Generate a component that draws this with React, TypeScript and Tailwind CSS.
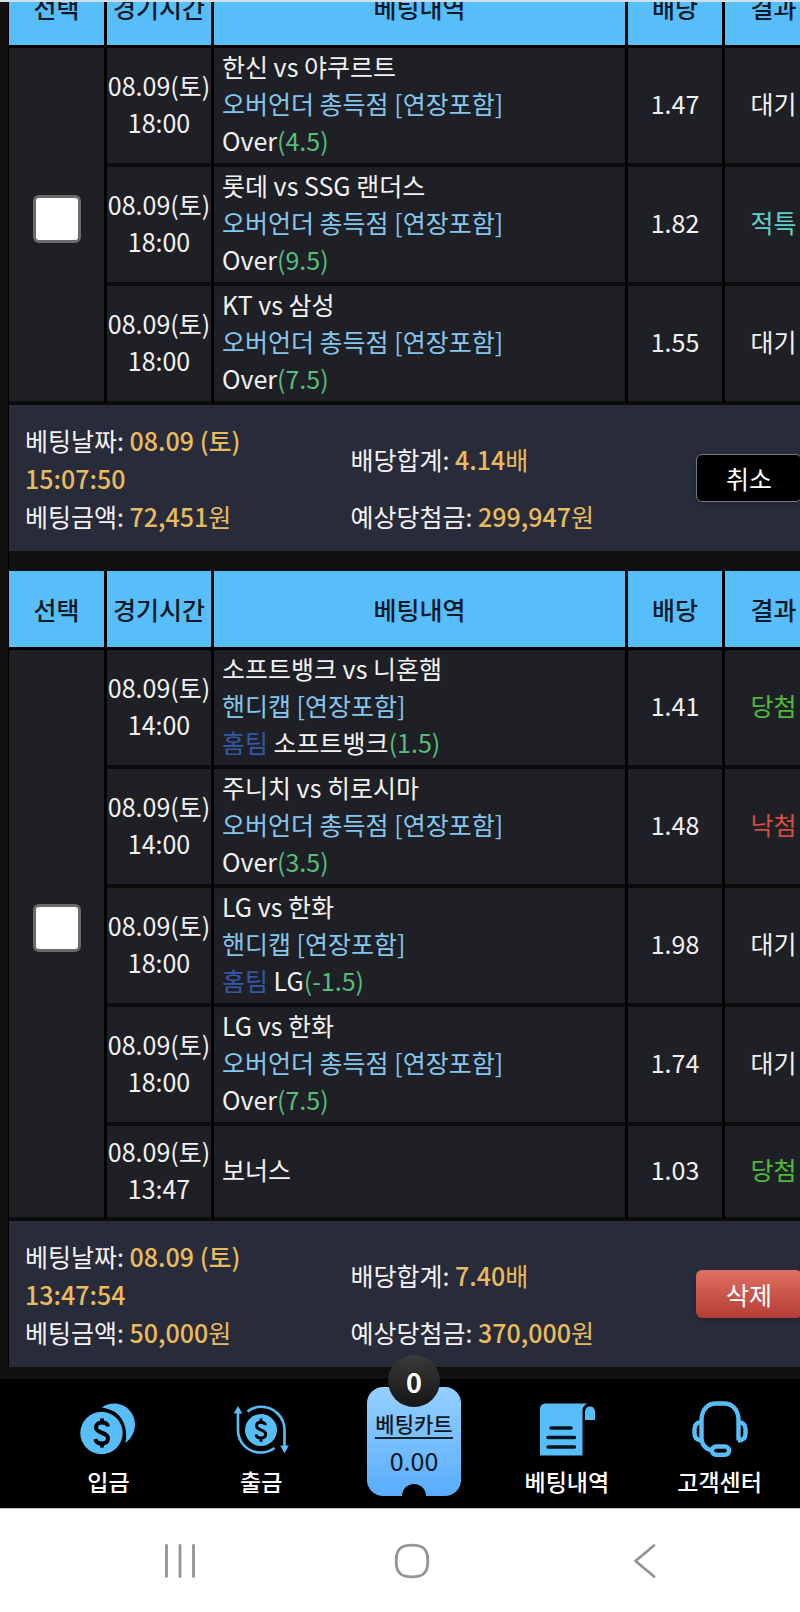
import React from 'react';

type Result = '대기' | '적특' | '당첨' | '낙첨';

interface Game {
  date: string;
  time: string;
  match: string;
  market?: string;
  home?: boolean;
  pick?: string;
  line?: string;
  odds: string;
  result: Result;
}

interface Slip {
  id: string;
  games: Game[];
  date: string;
  time: string;
  amount: string;
  total: string;
  expected: string;
  action: 'cancel' | 'delete';
}

const OVER_UNDER = '오버언더 총득점 [연장포함]';
const HANDICAP = '핸디캡 [연장포함]';

const slips: Slip[] = [
  {
    id: 'slip-1',
    games: [
      { date: '08.09(토)', time: '18:00', match: '한신 vs 야쿠르트', market: OVER_UNDER, pick: 'Over', line: '(4.5)', odds: '1.47', result: '대기' },
      { date: '08.09(토)', time: '18:00', match: '롯데 vs SSG 랜더스', market: OVER_UNDER, pick: 'Over', line: '(9.5)', odds: '1.82', result: '적특' },
      { date: '08.09(토)', time: '18:00', match: 'KT vs 삼성', market: OVER_UNDER, pick: 'Over', line: '(7.5)', odds: '1.55', result: '대기' }
    ],
    date: '08.09 (토)',
    time: '15:07:50',
    amount: '72,451',
    total: '4.14',
    expected: '299,947',
    action: 'cancel'
  },
  {
    id: 'slip-2',
    games: [
      { date: '08.09(토)', time: '14:00', match: '소프트뱅크 vs 니혼햄', market: HANDICAP, home: true, pick: '소프트뱅크', line: '(1.5)', odds: '1.41', result: '당첨' },
      { date: '08.09(토)', time: '14:00', match: '주니치 vs 히로시마', market: OVER_UNDER, pick: 'Over', line: '(3.5)', odds: '1.48', result: '낙첨' },
      { date: '08.09(토)', time: '18:00', match: 'LG vs 한화', market: HANDICAP, home: true, pick: 'LG', line: '(-1.5)', odds: '1.98', result: '대기' },
      { date: '08.09(토)', time: '18:00', match: 'LG vs 한화', market: OVER_UNDER, pick: 'Over', line: '(7.5)', odds: '1.74', result: '대기' },
      { date: '08.09(토)', time: '13:47', match: '보너스', odds: '1.03', result: '당첨' }
    ],
    date: '08.09 (토)',
    time: '13:47:54',
    amount: '50,000',
    total: '7.40',
    expected: '370,000',
    action: 'delete'
  }
];

const resultColor: Record<Result, string> = {
  대기: 'text-[#f2f2f2]',
  적특: 'text-[#62cfca]',
  당첨: 'text-[#4fb93a]',
  낙첨: 'text-[#d74c3d]'
};

const headCell = 'h-[79px] border-b-[3px] border-black bg-[#58bef9] p-0 font-medium text-[#0b1a26]';
const bodyCell = 'border-b-4 border-b-[#0c0c0d] border-r-black bg-[#1f2025] pt-0 pb-1 leading-[37px]';

const SlipTable: React.FC<{ slip: Slip }> = ({ slip }) => (
  <table className="w-full table-fixed border-separate border-spacing-0">
    <colgroup>
      <col className="w-[98px]" />
      <col className="w-[107px]" />
      <col />
      <col className="w-[97px]" />
      <col className="w-[97px]" />
    </colgroup>
    <thead>
      <tr>
        <th className={`${headCell} border-r-[3px]`}>선택</th>
        <th className={`${headCell} border-r-[3px]`}>경기시간</th>
        <th className={`${headCell} border-r-[3px]`}>베팅내역</th>
        <th className={`${headCell} border-r-[3px]`}>배당</th>
        <th className={headCell}>결과</th>
      </tr>
    </thead>
    <tbody>
      {slip.games.map((game, idx) => (
        <tr key={idx} className={game.market ? 'h-[119px]' : 'h-[95px]'}>
          {idx === 0 && (
            <td rowSpan={slip.games.length} className={`${bodyCell} border-r-[3px] px-0`}>
              <input
                type="checkbox"
                aria-label="선택"
                className="mx-auto mb-2 block size-12 appearance-none rounded-md border-[3px] border-[#6a6a6a] bg-white checked:bg-[#58bef9]"
              />
            </td>
          )}
          <td className={`${bodyCell} border-r-[3px] px-0 text-center whitespace-nowrap`}>
            {game.date}
            <br />
            {game.time}
          </td>
          <td className={`${bodyCell} border-r-[3px] pr-0 pl-2`}>
            <p>{game.match}</p>
            {game.market && <p className="text-[#84c6ee]">{game.market}</p>}
            {game.pick && (
              <p>
                {game.home && <span className="text-[#3458a6]">홈팀 </span>}
                {game.pick}
                <span className="text-[#55be7e]">{game.line}</span>
              </p>
            )}
          </td>
          <td className={`${bodyCell} border-r-[3px] px-0 text-center`}>{game.odds}</td>
          <td className={`${bodyCell} px-0 text-center ${resultColor[game.result]}`}>{game.result}</td>
        </tr>
      ))}
    </tbody>
  </table>
);

const SlipSummary: React.FC<{ slip: Slip }> = ({ slip }) => (
  <div className="grid grid-cols-[42%_1fr_auto] items-center bg-[#282b3a] py-4">
    <p className="pr-12 pl-4">
      베팅날짜:{' '}
      <span className="font-medium text-[#e9bb5d]">
        {slip.date} {slip.time}
      </span>
    </p>
    <p>
      배당합계: <span className="text-[#e9bb5d]"><b className="font-medium">{slip.total}</b>배</span>
    </p>
    <div className="row-span-2 mr-5">
      {slip.action === 'cancel' ? (
        <button type="button" className="block h-12 w-[106px] rounded-md border border-[#77787d] bg-black leading-none text-white shadow-md">
          취소
        </button>
      ) : (
        <button type="button" className="block h-12 w-[106px] rounded-md bg-linear-to-b from-[#df7062] to-[#b53c35] leading-none text-white shadow-md">
          삭제
        </button>
      )}
    </div>
    <p className="pl-4">
      베팅금액: <span className="text-[#e9bb5d]"><b className="font-medium">{slip.amount}</b>원</span>
    </p>
    <p>
      예상당첨금: <span className="text-[#e9bb5d]"><b className="font-medium">{slip.expected}</b>원</span>
    </p>
  </div>
);

const DepositIcon = () => (
  <svg width="56" height="56" viewBox="0 0 56 56" fill="none" aria-hidden="true">
    <path d="M22 6.500C25.500 3.500 29.500 2.500 34 2.500C46 2.500 55 12 55 23.500C55 31 51 38 45.500 42C47.500 31 45 20 38 13.500C33.500 9.500 28 7.500 22 6.500Z" fill="#58bef9" />
    <circle cx="21.500" cy="32" r="21.200" fill="#58bef9" />
    <path d="M28 25.500C27.500 22.500 25 21.500 22 21.500C18.500 21.500 16 23.500 16 26.500C16 33 28 30.500 28 37.500C28 41 25 42.500 22 42.500C18.500 42.500 15.800 41 15.500 38M22 17.500V21.500M22 42.500V46.500" stroke="#000" strokeWidth="4" />
  </svg>
);

const WithdrawIcon = () => (
  <svg width="56" height="56" viewBox="0 0 56 56" fill="none" aria-hidden="true">
    <circle cx="28" cy="29" r="16" fill="#58bef9" />
    <path d="M32.500 24C32 22 30.300 21.300 28 21.300C25.300 21.300 23.500 22.500 23.500 25C23.500 29.700 32.700 28 32.700 33.200C32.700 35.700 30.500 37 28 37C25.300 37 23.300 36 23 33.500M28 17.500V21.500M28 37V40.800" stroke="#000" strokeWidth="3" />
    <path d="M14.500 10.500C18.500 7 23 5.800 28 5.800C41 5.800 51.500 16 51.500 29V45" stroke="#58bef9" strokeWidth="2.600" />
    <path d="M5 12V29C5 42 15 51.500 28 51.500C33 51.500 37.500 50 41.500 47" stroke="#58bef9" strokeWidth="2.600" />
    <path d="M5 5L9.300 12.500H0.700ZM51.500 52.500L47.200 44.500H55.800Z" fill="#58bef9" />
  </svg>
);

const HistoryIcon = () => (
  <svg width="56" height="56" viewBox="0 0 56 56" fill="none" aria-hidden="true">
    <path d="M1 8C1 4.800 3.500 2.500 6.500 2.500H49C45 4 43.500 6.500 43.500 10.500V54.500H1Z" fill="#58bef9" />
    <path d="M46 19V11C46 7.500 48 5.500 51 5.500C54 5.500 56 7.500 56 11V19Z" fill="#58bef9" />
    <path d="M12 27H32M9 36.500H35.500M9 46H35.500" stroke="#06131d" strokeWidth="3.500" strokeLinecap="round" />
  </svg>
);

const SupportIcon = () => (
  <svg width="56" height="56" viewBox="0 0 56 56" fill="none" stroke="#58bef9" strokeWidth="4.400" aria-hidden="true">
    <path d="M9.500 40V19C9.500 9 15.500 2.500 24 2.500H32C40.500 2.500 46.500 9 46.500 19V39.500" />
    <path d="M9.500 21C5 21 2.500 24 2.500 28V32.500C2.500 36.500 5 39 9.500 39.500C11 44.500 14.500 48.500 20 49.500" />
    <path d="M46 21C51 21 53.500 24 53.500 28V32.500C53.500 37 51 39.500 46 39.500" />
    <rect x="20" y="45.500" width="17" height="8.300" rx="4" />
  </svg>
);

interface NavItemProps {
  label: string;
  icon: React.ReactNode;
}

const NavItem: React.FC<NavItemProps> = ({ label, icon }) => (
  <a href="#" className="flex flex-col items-center gap-2.5 pt-[22px] pb-3 text-[23px] leading-[29px] font-medium text-white">
    {icon}
    {label}
  </a>
);

const CartButton = () => (
  <a href="#" className="relative mx-auto mt-2 flex h-[109px] w-[94px] flex-col items-center rounded-2xl bg-linear-to-b from-[#94d0ff] to-[#58adfb] pt-[22px] text-[#0b1622]">
    <span className="absolute -top-8 left-1/2 flex size-[52px] -translate-x-1/2 items-center justify-center rounded-full bg-linear-to-b from-[#3a3a3a] to-[#161616] text-[27px] leading-none font-bold text-white">
      0
    </span>
    <span className="border-b-2 border-[#14222f] text-[21px] leading-7 font-medium whitespace-nowrap">베팅카트</span>
    <span className="leading-[42px]">0.00</span>
    <span className="absolute bottom-0 left-1/2 h-3 w-6 -translate-x-1/2 rounded-t-full bg-black" />
  </a>
);

const SystemBar = () => (
  <div className="grid h-[104px] grid-cols-3 place-items-center border-t border-[#c4c4c0] bg-white pr-10 pl-16">
    <button type="button" aria-label="최근 앱">
      <svg width="36" height="36" viewBox="0 0 36 36" stroke="#949494" strokeWidth="2.800" strokeLinecap="round">
        <path d="M4.500 2.500V33.500M18 2.500V33.500M31.500 2.500V33.500" />
      </svg>
    </button>
    <button type="button" aria-label="홈">
      <svg width="36" height="36" viewBox="0 0 36 36" fill="none" stroke="#949494" strokeWidth="2.800">
        <path d="M18 2.200C29.500 2.200 33.800 6.500 33.800 18C33.800 29.500 29.500 33.800 18 33.800C6.500 33.800 2.200 29.500 2.200 18C2.200 6.500 6.500 2.200 18 2.200Z" />
      </svg>
    </button>
    <button type="button" aria-label="뒤로">
      <svg width="36" height="36" viewBox="0 0 36 36" fill="none" stroke="#949494" strokeWidth="2.800" strokeLinecap="round" strokeLinejoin="round">
        <path d="M28 2.500L9.500 18L28 33.500" />
      </svg>
    </button>
  </div>
);

export default function App() {
  return (
    <div className="min-h-screen bg-[#111112] font-['Noto_Sans_CJK_KR','Noto_Sans_KR',sans-serif] text-[25px] leading-[38px] text-[#f2f2f2]">
      <main className="overflow-hidden border-t-2 border-[#cfe0ea] pb-3 pl-2">
        {/* slips run past the right edge of the screen */}
        <div className="-mt-[33px] flex w-[calc(100%+22px)] flex-col gap-5 border-l border-black">
          {slips.map((slip) => (
            <section key={slip.id}>
              <SlipTable slip={slip} />
              <SlipSummary slip={slip} />
            </section>
          ))}
        </div>
      </main>

      {/* Bottom menu */}
      <nav className="grid grid-cols-5 bg-black pr-1 pl-8">
        <NavItem label="입금" icon={<DepositIcon />} />
        <NavItem label="출금" icon={<WithdrawIcon />} />
        <CartButton />
        <NavItem label="베팅내역" icon={<HistoryIcon />} />
        <NavItem label="고객센터" icon={<SupportIcon />} />
      </nav>

      <SystemBar />
    </div>
  );
}
